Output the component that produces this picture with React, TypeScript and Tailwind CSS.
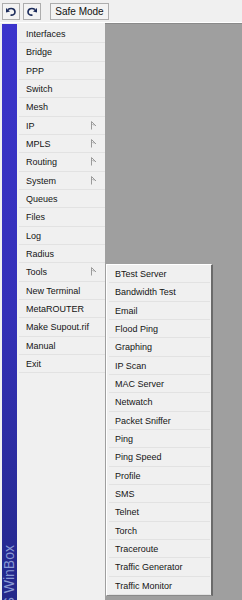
import React from "react";

const mainItems: { label: string; sub?: boolean }[] = [
  { label: "Interfaces" },
  { label: "Bridge" },
  { label: "PPP" },
  { label: "Switch" },
  { label: "Mesh" },
  { label: "IP", sub: true },
  { label: "MPLS", sub: true },
  { label: "Routing", sub: true },
  { label: "System", sub: true },
  { label: "Queues" },
  { label: "Files" },
  { label: "Log" },
  { label: "Radius" },
  { label: "Tools", sub: true },
  { label: "New Terminal" },
  { label: "MetaROUTER" },
  { label: "Make Supout.rif" },
  { label: "Manual" },
  { label: "Exit" },
];

const toolItems = [
  "BTest Server",
  "Bandwidth Test",
  "Email",
  "Flood Ping",
  "Graphing",
  "IP Scan",
  "MAC Server",
  "Netwatch",
  "Packet Sniffer",
  "Ping",
  "Ping Speed",
  "Profile",
  "SMS",
  "Telnet",
  "Torch",
  "Traceroute",
  "Traffic Generator",
  "Traffic Monitor",
];

function SubArrow() {
  return (
    <svg width="6" height="9" viewBox="0 0 6 9" className="absolute right-[8px] top-[4px]">
      <path d="M0.5 0.5 V8.5 M0.5 0.5 L5 5 M1.5 3 L3 4.5" stroke="#9a9a9a" strokeWidth="1" fill="none" />
    </svg>
  );
}

function UndoIcon() {
  return (
    <svg width="12" height="10" viewBox="0 0 12 10">
      <path d="M3 2.5 C6 0.5 10 1.5 10 5 C10 7.5 7.5 8.5 5.5 8" stroke="#1a2a5a" strokeWidth="1.6" fill="none" />
      <path d="M1 1 L1 5.5 L5 4.5 Z" fill="#1a2a5a" />
    </svg>
  );
}

function RedoIcon() {
  return (
    <svg width="12" height="10" viewBox="0 0 12 10">
      <path d="M9 2.5 C6 0.5 2 1.5 2 5 C2 7.5 4.5 8.5 6.5 8" stroke="#1a2a5a" strokeWidth="1.6" fill="none" />
      <path d="M11 1 L11 5.5 L7 4.5 Z" fill="#1a2a5a" />
    </svg>
  );
}

export default function App() {
  const font = { fontFamily: '"Liberation Sans", Arial, sans-serif' };
  return (
    <div className="w-[242px] h-[600px] overflow-hidden bg-[#f0f0f0] flex flex-col text-[9px] text-[#141414]" style={font}>
      {/* toolbar */}
      <div className="h-[23px] shrink-0 bg-[#f0f0f0] border-b border-white flex items-start pt-[3px] pl-[2px] gap-[3px]">
        <div className="w-[18px] h-[17px] border border-[#adadad] bg-[#f3f3f3] flex items-center justify-center">
          <UndoIcon />
        </div>
        <div className="w-[18px] h-[17px] border border-[#adadad] bg-[#f3f3f3] flex items-center justify-center">
          <RedoIcon />
        </div>
        <div className="ml-[6px] w-[59px] h-[17px] border border-[#adadad] bg-[#f3f3f3] flex items-center justify-center text-[10px] text-[#111]">
          Safe Mode
        </div>
      </div>
      {/* body */}
      <div className="flex-1 flex relative">
        <div className="w-[2px] bg-[#f0f0f0]" />
        <div className="w-[15px] mt-[1px] bg-gradient-to-b from-[#3b34cc] via-[#3430b8] to-[#23288a] overflow-hidden relative">
          <div className="absolute left-[0px] bottom-[-59px] [writing-mode:vertical-rl] rotate-180 text-[14px] leading-[14px] text-[#8a9ad4] whitespace-nowrap">
            RouterOS WinBox
          </div>
        </div>
        <div className="w-[88px] bg-[#f0f0f0] pt-[2px] pl-[2px]">
          {mainItems.map((it) => (
            <div
              key={it.label}
              className="relative h-[18.33px] leading-[18px] pl-[7px] border-b border-[#e2e2e2] whitespace-nowrap"
            >
              {it.label}
              {it.sub && <SubArrow />}
            </div>
          ))}
        </div>
        <div className="flex-1 bg-[#9f9f9f] border-t border-[#8a8a8a]" />
        {/* Tools submenu */}
        <div className="absolute left-[106px] top-[241px] w-[107px] bg-[#f0f0f0] border-l border-t border-white border-r-2 border-r-[#6a6a6a] border-b border-b-[#8a8a8a] pl-[2px] pr-[1px]">
          {toolItems.map((t) => (
            <div key={t} className="h-[18.33px] leading-[18px] pl-[6px] border-b border-[#e2e2e2] whitespace-nowrap">
              {t}
            </div>
          ))}
        </div>
      </div>
    </div>
  );
}
